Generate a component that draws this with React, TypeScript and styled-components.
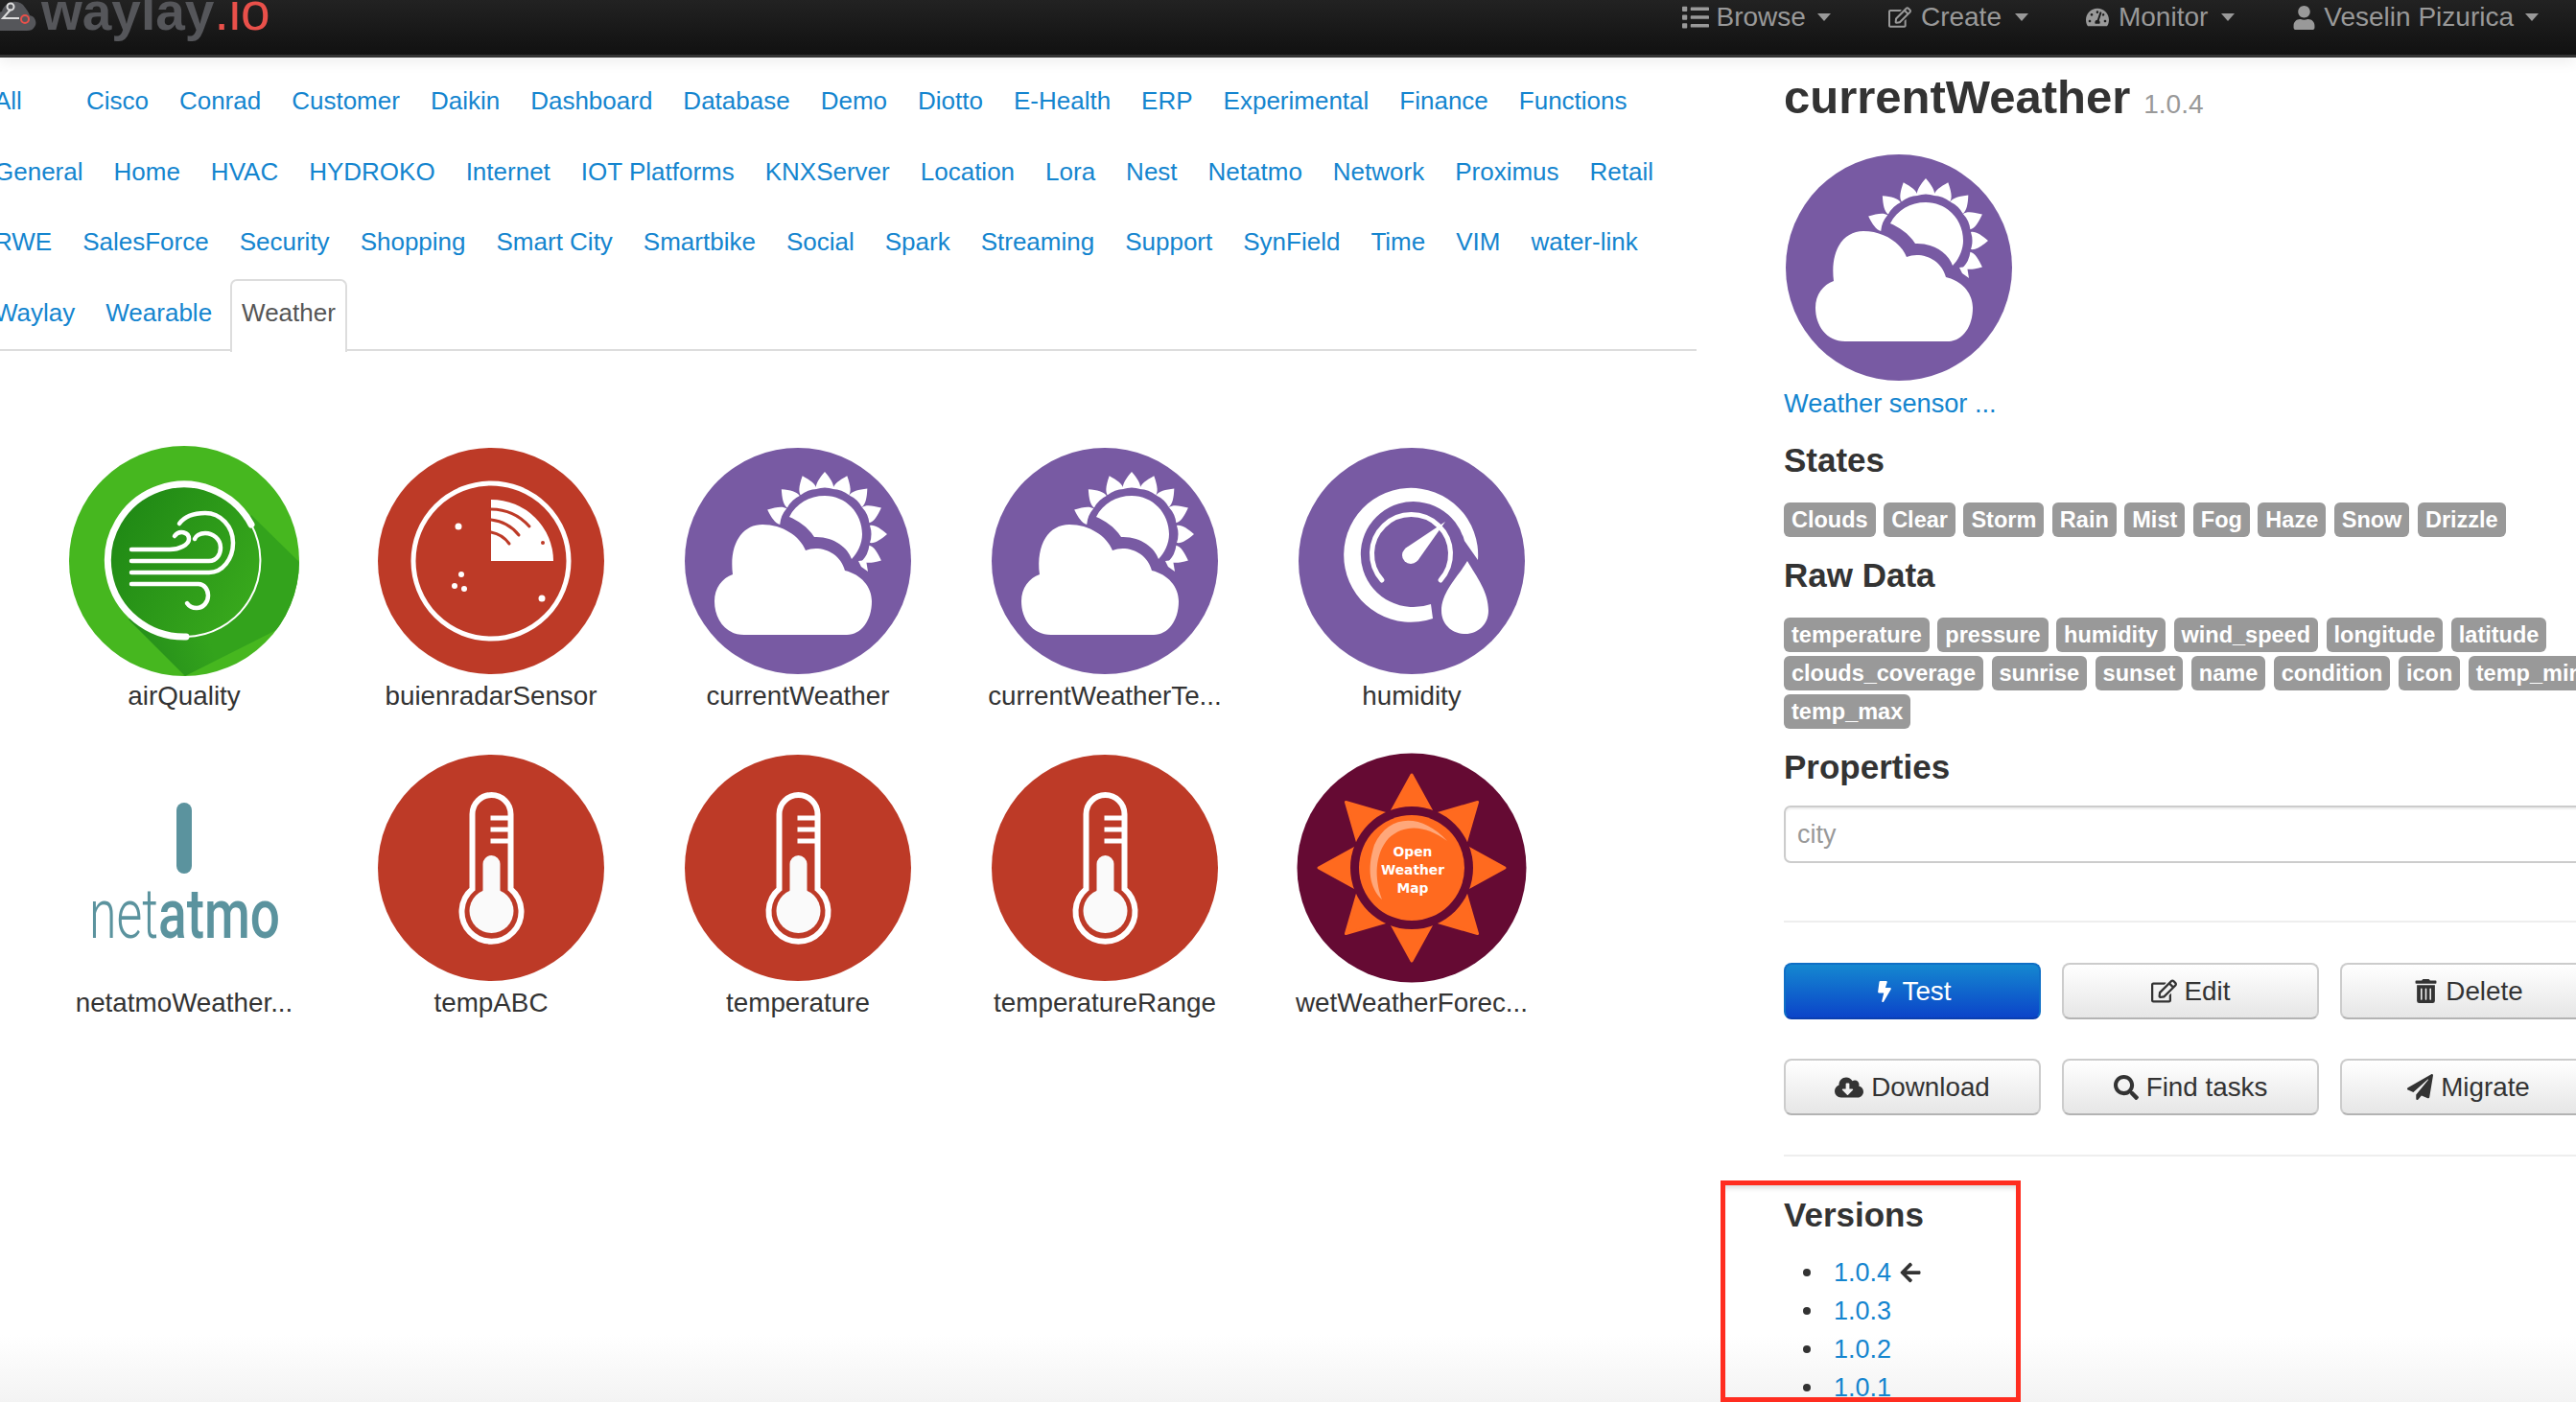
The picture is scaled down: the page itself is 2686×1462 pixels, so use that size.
import React from "react";
import styled, { createGlobalStyle } from "styled-components";
import {
  FaArrowLeft,
  FaBolt,
  FaCloudDownloadAlt,
  FaList,
  FaPaperPlane,
  FaRegEdit,
  FaSearch,
  FaTachometerAlt,
  FaTrashAlt,
  FaUser,
} from "react-icons/fa";

const GlobalStyle = createGlobalStyle`
  html, body {
    margin: 0;
    padding: 0;
    background: #fff;
  }
`;

const Page = styled.div`
  position: relative;
  width: 2686px;
  height: 1462px;
  overflow: hidden;
  font-family: "Liberation Sans", Arial, sans-serif;
  color: #333;
  background: linear-gradient(to bottom, #fff calc(100% - 70px), #f3f3f3 100%);
`;

const Navbar = styled.header`
  display: flex;
  align-items: flex-start;
  height: 57px;
  overflow: hidden;
  border-bottom: 3px solid #333;
  background: linear-gradient(to bottom, #222, #111);
  box-shadow: 0 4px 14px rgba(0, 0, 0, 0.08);
`;

const LogoMark = styled.svg`
  flex: none;
  width: 40px;
  height: 36px;
`;

const LogoText = styled.div`
  margin: -18px 0 0 3px;
  font-size: 55px;
  line-height: 60px;
  font-weight: 700;
  color: #55565a;
`;

const LogoAccent = styled.span`
  font-weight: 400;
  color: #e9504a;
`;

const NavMenu = styled.nav`
  display: flex;
  gap: 60px;
  margin-left: auto;
  padding-right: 39px;
`;

const NavItem = styled.div<{ $gap: number }>`
  display: flex;
  align-items: center;
  gap: ${(p) => p.$gap}px;
  height: 36px;
  font-size: 28px;
  color: #999;
`;

const Caret = styled.span`
  width: 0;
  height: 0;
  margin-left: 4px;
  border-left: 7px solid transparent;
  border-right: 7px solid transparent;
  border-top: 8px solid #999;
`;

const Main = styled.main`
  display: flex;
`;

const LeftPane = styled.section`
  flex: none;
  width: 1860px;
`;

const Tabs = styled.ul`
  display: flex;
  flex-wrap: wrap;
  width: 1791px;
  margin: 9px 0 0 -22px;
  padding: 0;
  list-style: none;
  border-bottom: 2px solid #ddd;
`;

const Tab = styled.li<{ $active?: boolean; $wide?: boolean }>`
  box-sizing: border-box;
  height: 75px;
  margin: 0 0 -1.5px;
  padding: 0 ${(p) => (p.$active ? 10 : 16)}px 3px;
  margin-right: ${(p) => (p.$wide ? 35 : 0)}px;
  line-height: 72px;
  font-size: 26px;
  color: ${(p) => (p.$active ? "#555" : "#1485cf")};
  ${(p) =>
    p.$active &&
    `
    position: relative;
    top: 1.5px;
    height: 76px;
    margin-left: 3px;
    line-height: 67px;
    background: #fff;
    border: 2px solid #ddd;
    border-bottom: 0;
    border-radius: 7px 7px 0 0;
  `}
`;

const IconGrid = styled.div`
  display: grid;
  grid-template-columns: repeat(5, 320px);
  grid-auto-rows: 320px;
  margin: 99px 0 0 32px;
`;

const IconCell = styled.div`
  display: flex;
  flex-direction: column;
  align-items: center;
`;

const IconCanvas = styled.svg`
  display: block;
  flex: none;
  width: 240px;
  height: 240px;
`;

const IconName = styled.div`
  margin-top: 4px;
  font-size: 27.8px;
  line-height: 34px;
  white-space: nowrap;
  color: #333;
`;

const Detail = styled.aside`
  flex: none;
  width: 900px;
  padding-top: 13px;
`;

const Title = styled.h1`
  margin: 0;
  font-size: 49px;
  line-height: 56px;
  font-weight: 700;
  color: #333;
`;

const TitleVersion = styled.small`
  margin-left: 14px;
  font-size: 28px;
  font-weight: 400;
  color: #999;
`;

const HeroIcon = styled.svg`
  display: block;
  width: 236px;
  height: 236px;
  margin: 24px 0 5px 2px;
`;

const Link = styled.a`
  color: #1485cf;
  text-decoration: none;
`;

const Description = styled(Link)`
  display: block;
  font-size: 27.2px;
  line-height: 38px;
`;

const Heading = styled.h3`
  margin: 20px 0 24px;
  font-size: 35px;
  line-height: 40px;
  font-weight: 700;
  color: #333;
`;

const LabelList = styled.div`
  display: flex;
  flex-wrap: wrap;
  gap: 4px 8.5px;
`;

const Label = styled.span`
  display: inline-flex;
  align-items: center;
  height: 36px;
  padding: 0 8px;
  border-radius: 6px;
  background: #999;
  font-size: 23.5px;
  font-weight: 700;
  color: #fff;
`;

const PropertyInput = styled.input`
  display: block;
  box-sizing: border-box;
  width: 900px;
  height: 60px;
  margin-top: -4px;
  padding: 0 12px;
  border: 2px solid #ccc;
  border-radius: 7px;
  background: #fff;
  box-shadow: inset 0 2px 2px rgba(0, 0, 0, 0.07);
  font-family: inherit;
  font-size: 27px;
  &::placeholder {
    color: #999;
    opacity: 1;
  }
`;

const Rule = styled.hr`
  height: 2px;
  margin: 60px 0 42px;
  border: 0;
  background: #eee;
`;

const ButtonRow = styled.div`
  display: flex;
  gap: 22px;
  margin-bottom: 41px;
  &:last-of-type {
    margin-bottom: 0;
  }
`;

const Button = styled.button<{ $primary?: boolean }>`
  display: flex;
  flex: none;
  align-items: center;
  justify-content: center;
  gap: 8px;
  box-sizing: border-box;
  width: 268px;
  height: 59px;
  border: 2px solid ${(p) => (p.$primary ? "#0f6fc6" : "#ccc")};
  border-bottom-color: ${(p) => (p.$primary ? "#0a3fb0" : "#b3b3b3")};
  border-radius: 8px;
  background: ${(p) =>
    p.$primary
      ? "linear-gradient(to bottom, #1588d0, #0b44c9)"
      : "linear-gradient(to bottom, #fff, #e6e6e6)"};
  font-family: inherit;
  font-size: 27.8px;
  color: ${(p) => (p.$primary ? "#fff" : "#333")};
`;

const VersionRule = styled(Rule)`
  margin: 41px 0 41px;
`;

const VersionHeading = styled(Heading)`
  margin: 0 0 20px;
`;

const VersionList = styled.ul`
  margin: 0;
  padding: 0 0 0 52px;
  list-style: none;
`;

const VersionItem = styled.li`
  display: flex;
  align-items: center;
  height: 40px;
  font-size: 27px;
  line-height: 40px;
  &::before {
    content: "";
    flex: none;
    width: 8px;
    height: 8px;
    margin: 0 24px 0 -32px;
    border-radius: 50%;
    background: #333;
  }
  svg {
    margin-left: 8px;
  }
`;

const Callout = styled.div`
  position: absolute;
  left: 1794px;
  top: 1231px;
  box-sizing: border-box;
  width: 313px;
  height: 231px;
  border: 5px solid #ff2d20;
  box-shadow: inset 0 6px 6px -4px rgba(0, 0, 0, 0.18);
`;

const PURPLE = "#785aa3";
const RED = "#bd3a27";
const RAY_ANGLES = [-67, -44, -21, 0, 21, 43, 65, 90, 115];

const WeatherShapes = () => (
  <>
    <circle cx="118" cy="118" r="118" fill={PURPLE} />
    <path
      fill="#fff"
      d="M62 195C42 195 31 178 31 160C31 146 39 136 50 132C46 100 60 80 81 80C102 80 120 92 126 107C140 101 162 108 167 128C184 132 195 145 195 160C195 180 184 195 169 195Z"
    />
    <path
      fill="#fff"
      d="M109 72C116 58 130 50 146 50C168 50 185 68 185 90C185 100 180 110 174 116C170 104 155 92 135 93C128 82 118 76 109 72Z"
    />
    {RAY_ANGLES.map((angle) => (
      <path
        key={angle}
        fill="#fff"
        transform={`translate(146 90) rotate(${angle})`}
        d="M0-65C6-58 10-52 9-47Q0-50-9-47C-10-52-6-58 0-65Z"
      />
    ))}
    <path fill="#fff" d="M181 118L189 117L191 129L184 124Z" />
  </>
);

const AirQualityIcon = () => (
  <IconCanvas viewBox="0 0 240 240">
    <defs>
      <clipPath id="airClip">
        <circle cx="120" cy="120" r="120" />
      </clipPath>
      <linearGradient id="airDisc" x1="0" y1="0" x2="1" y2="0.6">
        <stop offset="0" stopColor="#1c8414" />
        <stop offset="1" stopColor="#37a71c" />
      </linearGradient>
      <linearGradient id="airShadow" x1="0" y1="1" x2="1" y2="0.7">
        <stop offset="0" stopColor="#22891a" />
        <stop offset="0.5" stopColor="#33a31c" />
      </linearGradient>
    </defs>
    <circle cx="120" cy="120" r="120" fill="#46b71f" />
    <path
      clipPath="url(#airClip)"
      fill="url(#airShadow)"
      d="M190 72L240 121V180L121 240L62 181Z"
    />
    <circle cx="120" cy="120" r="79" fill="url(#airDisc)" />
    <path
      fill="none"
      stroke="#fff"
      strokeWidth="7"
      strokeLinecap="round"
      d="M190 82A79.5 79.5 0 1 0 122 199"
    />
    <path
      fill="none"
      stroke="#fff"
      strokeWidth="2"
      d="M122 199A79.5 79.5 0 0 0 190 82"
    />
    <g fill="none" stroke="#fff" strokeWidth="4.5" strokeLinecap="round">
      <path d="M65 108H105C115 108 125 103 125 97C125 90 115 87 110 94" />
      <path d="M65 120H146C154 120 158 113 158 106C158 97 150 91 142 91C136 91 132 94 131 97" />
      <path d="M65 132H146C160 132 171 118 171 101C171 84 158 70 142 70C130 70 120 74 115 81" />
      <path d="M65 144H135C141 144 145 150 145 156C145 163 140 169 133 169C128 169 125 167 123 164" />
    </g>
  </IconCanvas>
);

const RadarIcon = () => (
  <IconCanvas viewBox="-1 -2 240 240">
    <circle cx="119" cy="118" r="118" fill={RED} />
    <circle cx="119" cy="118" r="81" fill="none" stroke="#fff" strokeWidth="5" />
    <path fill="#fff" d="M119 118V54A65 64 0 0 1 184 118Z" />
    <g fill="none" stroke={RED} strokeWidth="3" strokeLinecap="round">
      <path d="M119 64A54 54 0 0 1 159 82" />
      <path d="M119 75A43 43 0 0 1 148 91" />
      <path d="M119 88A30 30 0 0 1 138 100" />
    </g>
    <circle cx="173" cy="99" r="2" fill={RED} />
    <g fill="#fff">
      <circle cx="85" cy="82" r="3.5" />
      <circle cx="88" cy="132" r="3" />
      <circle cx="81" cy="144" r="3" />
      <circle cx="91" cy="147" r="3" />
      <circle cx="172" cy="157" r="3.5" />
    </g>
  </IconCanvas>
);

const WeatherIcon = () => (
  <IconCanvas viewBox="-2 -2 240 240">
    <WeatherShapes />
  </IconCanvas>
);

const HumidityIcon = () => (
  <IconCanvas viewBox="-2 -2 240 240">
    <circle cx="118" cy="118" r="118" fill={PURPLE} />
    <path
      fill="#fff"
      d="M187 117A70 70 0 1 0 140 178L138 163A55 55 0 1 1 173 97Z"
    />
    <path
      fill="none"
      stroke="#fff"
      strokeWidth="5"
      strokeLinecap="round"
      d="M87 138A41 41 0 1 1 148 138"
    />
    <circle cx="117" cy="112" r="9" fill="#fff" />
    <path fill="#fff" d="M111 105L153 77L124 118Z" />
    <path
      fill="#fff"
      d="M176 118C186 135 198 150 198 170C198 184 187 194 174 194C160 194 149 184 149 170C149 150 166 135 176 118Z"
    />
  </IconCanvas>
);

const NetatmoIcon = () => (
  <IconCanvas viewBox="0 0 240 240">
    <rect x="112" y="52" width="16" height="74" rx="8" fill="#5b939e" />
    <text
      x="21"
      y="193"
      textLength="72"
      lengthAdjust="spacingAndGlyphs"
      fontFamily="Roboto, sans-serif"
      fontWeight="300"
      fontSize="72"
      fill="#5b939e"
    >
      net
    </text>
    <text
      x="93"
      y="193"
      textLength="127"
      lengthAdjust="spacingAndGlyphs"
      fontFamily="Roboto, sans-serif"
      fontWeight="500"
      fontSize="72"
      fill="#5b939e"
    >
      atmo
    </text>
  </IconCanvas>
);

const ThermometerIcon = () => (
  <IconCanvas viewBox="-1.5 -2 240 240">
    <circle cx="118.5" cy="118" r="118" fill={RED} />
    <path
      fill="none"
      stroke="#fff"
      strokeWidth="6"
      d="M99 140V62A20 20 0 0 1 139 62V140A31 31 0 1 1 99 140Z"
    />
    <circle cx="119" cy="163" r="23" fill="#fafafa" />
    <path fill="#fafafa" d="M110 165V114A9 9 0 0 1 128 114V165Z" />
    <path
      fill="none"
      stroke="#fff"
      strokeWidth="5"
      d="M118 66H139M118 78H139M118 90H139"
    />
  </IconCanvas>
);

const RAY_TURNS = [0, 45, 90, 135, 180, 225, 270, 315];

const OpenWeatherIcon = () => (
  <IconCanvas viewBox="-1 -1 240 240">
    <circle cx="119" cy="119" r="119.5" fill="#650a33" />
    {RAY_TURNS.map((turn) => (
      <path
        key={turn}
        fill="#ff6a1f"
        stroke="#ff6a1f"
        strokeWidth="3"
        strokeLinejoin="round"
        transform={`rotate(${turn} 119 119)`}
        d="M119 22L97 62H141Z"
      />
    ))}
    <circle cx="119" cy="119" r="64" fill="#650a33" />
    <circle cx="119" cy="119" r="55" fill="#ff6a1f" />
    <path
      fill="#ffa77a"
      d="M156 91C130 62 95 62 80 95C72 120 75 140 88 152C80 130 80 105 95 88C112 72 135 75 156 91Z"
    />
    <g
      fill="#fff"
      fontFamily="'DejaVu Sans', sans-serif"
      fontSize="13.8"
      fontWeight="700"
      textAnchor="middle"
    >
      <text x="120" y="107">Open</text>
      <text x="120" y="126">Weather</text>
      <text x="120" y="145">Map</text>
    </g>
  </IconCanvas>
);

const TAB_NAMES = [
  "All", "Cisco", "Conrad", "Customer", "Daikin", "Dashboard", "Database", "Demo", "Diotto", "E-Health", "ERP",
  "Experimental", "Finance", "Functions", "General", "Home", "HVAC", "HYDROKO", "Internet", "IOT Platforms",
  "KNXServer", "Location", "Lora", "Nest", "Netatmo", "Network", "Proximus", "Retail", "RWE", "SalesForce",
  "Security", "Shopping", "Smart City", "Smartbike", "Social", "Spark", "Streaming", "Support", "SynField", "Time",
  "VIM", "water-link", "Waylay", "Wearable", "Weather",
];

const SENSORS = [
  { name: "airQuality", icon: <AirQualityIcon /> },
  { name: "buienradarSensor", icon: <RadarIcon /> },
  { name: "currentWeather", icon: <WeatherIcon /> },
  { name: "currentWeatherTe...", icon: <WeatherIcon /> },
  { name: "humidity", icon: <HumidityIcon /> },
  { name: "netatmoWeather...", icon: <NetatmoIcon /> },
  { name: "tempABC", icon: <ThermometerIcon /> },
  { name: "temperature", icon: <ThermometerIcon /> },
  { name: "temperatureRange", icon: <ThermometerIcon /> },
  { name: "wetWeatherForec...", icon: <OpenWeatherIcon /> },
];

const STATES = ["Clouds", "Clear", "Storm", "Rain", "Mist", "Fog", "Haze", "Snow", "Drizzle"];

const RAW_DATA = [
  "temperature", "pressure", "humidity", "wind_speed", "longitude", "latitude", "clouds_coverage", "sunrise",
  "sunset", "name", "condition", "icon", "temp_min", "temp_max",
];

const VERSIONS = ["1.0.4", "1.0.3", "1.0.2", "1.0.1"];

const App = () => (
  <Page>
    <GlobalStyle />
    <Navbar>
      <LogoMark viewBox="0 0 40 36">
        <path
          fill="#55565a"
          d="M-4 32C-8 24-6 14 2 12C4 3 16-2 24 5C28 10 30 13 31 16C37 17 39 24 36 28C34 31 32 32 28 32Z"
        />
        <g fill="none" strokeWidth="2">
          <path stroke="#ddd" d="M11 10L3 19H20" />
          <circle cx="11" cy="7" r="3.5" stroke="#ddd" />
          <circle cx="26" cy="20" r="4" stroke="#e9504a" />
        </g>
      </LogoMark>
      <LogoText>
        waylay<LogoAccent>.io</LogoAccent>
      </LogoText>
      <NavMenu>
        <NavItem $gap={8}>
          <FaList size={28} />
          Browse
          <Caret />
        </NavItem>
        <NavItem $gap={10}>
          <FaRegEdit size={24} />
          Create
          <Caret />
        </NavItem>
        <NavItem $gap={10}>
          <FaTachometerAlt size={24} />
          Monitor
          <Caret />
        </NavItem>
        <NavItem $gap={8}>
          <FaUser size={25} />
          Veselin Pizurica
          <Caret />
        </NavItem>
      </NavMenu>
    </Navbar>
    <Main>
      <LeftPane>
        <Tabs>
          {TAB_NAMES.map((name) => (
            <Tab key={name} $active={name === "Weather"} $wide={name === "All"}>
              {name}
            </Tab>
          ))}
        </Tabs>
        <IconGrid>
          {SENSORS.map((sensor) => (
            <IconCell key={sensor.name}>
              {sensor.icon}
              <IconName>{sensor.name}</IconName>
            </IconCell>
          ))}
        </IconGrid>
      </LeftPane>
      <Detail>
        <Title>
          currentWeather<TitleVersion>1.0.4</TitleVersion>
        </Title>
        <HeroIcon viewBox="0 0 236 236">
          <WeatherShapes />
        </HeroIcon>
        <Description>Weather sensor ...</Description>
        <Heading>States</Heading>
        <LabelList>
          {STATES.map((state) => (
            <Label key={state}>{state}</Label>
          ))}
        </LabelList>
        <Heading>Raw Data</Heading>
        <LabelList>
          {RAW_DATA.map((field) => (
            <Label key={field}>{field}</Label>
          ))}
        </LabelList>
        <Heading>Properties</Heading>
        <PropertyInput placeholder="city" readOnly />
        <Rule />
        <ButtonRow>
          <Button $primary>
            <FaBolt size={22} />
            Test
          </Button>
          <Button>
            <FaRegEdit size={27} />
            Edit
          </Button>
          <Button>
            <FaTrashAlt size={25} />
            Delete
          </Button>
        </ButtonRow>
        <ButtonRow>
          <Button>
            <FaCloudDownloadAlt size={30} />
            Download
          </Button>
          <Button>
            <FaSearch size={26} />
            Find tasks
          </Button>
          <Button>
            <FaPaperPlane size={27} />
            Migrate
          </Button>
        </ButtonRow>
        <VersionRule />
        <VersionHeading>Versions</VersionHeading>
        <VersionList>
          {VERSIONS.map((version, index) => (
            <VersionItem key={version}>
              <Link>{version}</Link>
              {index === 0 && <FaArrowLeft size={24} />}
            </VersionItem>
          ))}
        </VersionList>
      </Detail>
    </Main>
    <Callout />
  </Page>
);

export default App;
